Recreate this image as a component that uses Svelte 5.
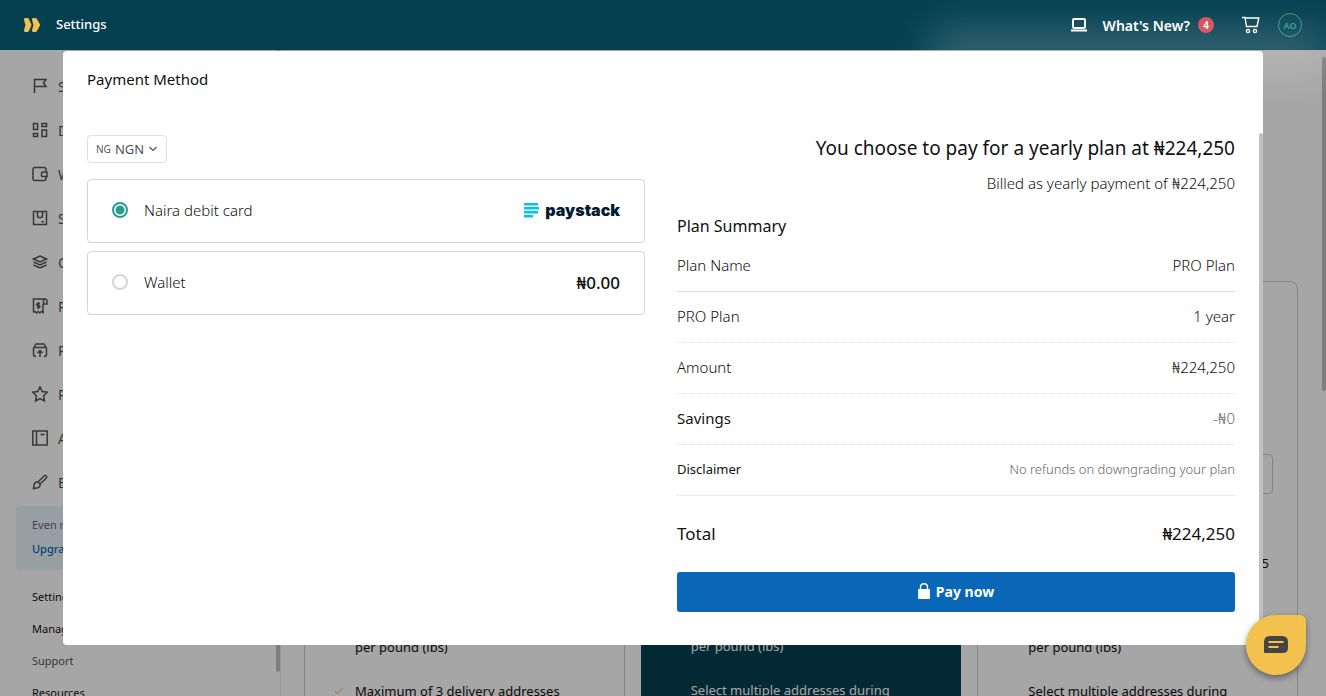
<script>
  const nav = [
    { label: 'Ship', icon: 'flag' },
    { label: 'Dashboard', icon: 'grid' },
    { label: 'Wallet', icon: 'wallet' },
    { label: 'Shipments', icon: 'box' },
    { label: 'Orders', icon: 'layers' },
    { label: 'Payments', icon: 'receipt' },
    { label: 'Pickups', icon: 'pickup' },
    { label: 'Promotions', icon: 'star' },
    { label: 'Address Book', icon: 'book' },
    { label: 'Branding', icon: 'brush' }
  ];

  const icons = {
    flag: 'M2.500 15V1.500h11.500L11.500 5l2.500 3.500H2.500',
    grid: 'M1.500 1.500h4v6h-4zM10 1.500h4.500v3H10zM1.500 11.500h4v3h-4zM10 8h4.500v6.500H10z',
    wallet: 'M14 5V3.500q0-2-2-2H3q-2 0-2 2v9q0 2 2 2h9q2 0 2-2V11M10.500 6H15v4.500h-4.500q-1 0-1-1V7q0-1 1-1z',
    box: 'M1.500 1.500h13v13h-13zM5.500 1.500V6q0 1.500 1.500 1.500h2q1.500 0 1.500-1.500V1.500M9.500 11.800h2.500',
    layers: 'M8 2l6.500 3L8 8 1.500 5zM1.500 8L8 11l6.500-3M1.500 11L8 14l6.500-3',
    receipt: 'M1.500 14.500V3q0-2-1-2h12q2.500 0 2.500 2v3h-4M11.500 6V3q0-2 1.500-2M11 6v8.500l-1.500-1-1.700 1.500-1.600-1.500-1.700 1.500-1.500-1.500-1.500 1M8 5.500H6q-1.300 0-1.300 1t1.300 1h.7q1.300 0 1.300 1t-1.300 1h-2M6.400 4v7',
    pickup: 'M4 14.500q-2.500 0-2.500-2v-6L4 2h8l2.500 4.500v6q0 2-2.500 2M2 5.500h12M8 15V9M5.500 11L8 8.500 10.500 11',
    star: 'M8 .8l2.200 4.700 5.100.7-3.700 3.600.9 5.200L8 12.500 3.500 15l.9-5.200L.7 6.200l5.100-.7z',
    book: 'M.8 1h14.400v14H.8zM4.500 1v14M8.500 4.500h4',
    brush: 'M6 8l6-6q1.200-1 2.200 0t0 2.200L8 10M6 8q-3-.5-3.800 2.200L1.500 14.500l4.300-.8Q8.600 13 8 10zM6 8l2 2'
  };

  const links = ['Settings', 'Manage Users', 'Support', 'Resources'];

  const plans = [
    { dark: false, features: ['Flat shipping discount per\u00a0pound\u00a0(lbs)', 'Maximum of 3 delivery addresses'] },
    { dark: true, features: ['Lower shipping discount per\u00a0pound\u00a0(lbs)', 'Select multiple addresses during shipment'] },
    { dark: false, features: ['Best shipping discount per\u00a0pound\u00a0(lbs)', 'Select multiple addresses during shipment'] }
  ];

  const rows = [
    { label: 'Plan Name', value: 'PRO Plan', kind: 'first' },
    { label: 'PRO Plan', value: '1 year', kind: '' },
    { label: 'Amount', value: '₦224,250', kind: '' },
    { label: 'Savings', value: '-₦0', kind: 'savings' },
    { label: 'Disclaimer', value: 'No refunds on downgrading your plan', kind: 'note' }
  ];

  let method = $state('card');
  let currency = $state('NGN');
</script>

<div class="app">
  <header class="topbar">
    <svg class="logo" viewBox="0 0 16 14" aria-hidden="true">
      <path d="M1.500 1.500h2L6 7l-2.500 5.500h-2L3 7zM9.500 1.500h2L14.500 7l-3 5.500h-2L11 7z" />
    </svg>
    <h1>Settings</h1>
    <nav class="tools">
      <svg class="laptop" viewBox="0 0 16 14" aria-hidden="true">
        <rect x="2" y="1" width="12" height="9" rx="1" />
        <path d="M0 12.500h16" />
      </svg>
      <a href="#news" class="news">What's New? <span class="badge">4</span></a>
      <a href="#cart" class="cart" aria-label="Cart">
        <svg viewBox="0 0 18 18" aria-hidden="true">
          <path d="M0 1.500h3l1.500 9h10.500L16.800 2H3" />
          <circle cx="6" cy="15" r="1.600" />
          <circle cx="13" cy="15" r="1.600" />
        </svg>
      </a>
      <button class="avatar">AO</button>
    </nav>
  </header>

  <div class="page">
    <aside>
      <ul class="menu">
        {#each nav as item}
          <li>
            <a href="#{item.icon}">
              <svg viewBox="0 0 16 16" aria-hidden="true"><path d={icons[item.icon]} /></svg>
              {item.label}
            </a>
          </li>
        {/each}
      </ul>
      <div class="upsell">
        <p>Even more features</p>
        <a href="#upgrade">Upgrade plan</a>
      </div>
      <ul class="links">
        {#each links as link}
          <li><a href="#{link}" class:muted={link === 'Support'}>{link}</a></li>
        {/each}
      </ul>
      <span class="thumb side"></span>
    </aside>

    <main>
      <div class="plans">
        {#each plans as plan}
          <section class="plan" class:dark={plan.dark}>
            <div class="period"></div>
            <p class="rate">5</p>
            <ul>
              {#each plan.features as feature}
                <li>
                  <svg viewBox="0 0 10 8" aria-hidden="true"><path d="M1 4l2.500 2.500L9 1" /></svg>
                  <span>{feature}</span>
                </li>
              {/each}
            </ul>
          </section>
        {/each}
      </div>
    </main>
    <span class="thumb main"></span>
  </div>

  <div class="overlay">
    <div class="modal" role="dialog" aria-labelledby="modal-title">
      <h2 id="modal-title">Payment Method</h2>
      <div class="modal-body">
        <form class="methods">
          <label class="currency">
            <small>NG</small>
            <select bind:value={currency} aria-label="Currency">
              <option>NGN</option>
              <option>USD</option>
            </select>
            <svg viewBox="0 0 8 6" aria-hidden="true"><path d="M.5 1L4 4.500 7.500 1" /></svg>
          </label>
          <label class="method">
            <input type="radio" name="method" value="card" bind:group={method} />
            <span>Naira debit card</span>
            <span class="paystack">
              <svg viewBox="0 0 15 16" aria-hidden="true">
                <path d="M0 1h14v2.500H0zM0 5h15v2.500H0zM0 9h14v2.500H0zM0 13h9v2.500H0z" />
              </svg>
              paystack
            </span>
          </label>
          <label class="method">
            <input type="radio" name="method" value="wallet" bind:group={method} />
            <span>Wallet</span>
            <strong>₦0.00</strong>
          </label>
        </form>

        <section class="summary">
          <h3 class="headline">You choose to pay for a yearly plan at ₦224,250</h3>
          <p class="billed">Billed as yearly payment of ₦224,250</p>
          <h4>Plan Summary</h4>
          <dl>
            {#each rows as row}
              <div class="row {row.kind}">
                <dt>{row.label}</dt>
                <dd>{row.value}</dd>
              </div>
            {/each}
            <div class="total">
              <dt>Total</dt>
              <dd>₦224,250</dd>
            </div>
          </dl>
          <button class="pay">
            <svg viewBox="0 0 12 16" aria-hidden="true">
              <rect y="6" width="12" height="10" rx="1" />
              <path d="M2.500 7V4q0-3.200 3.500-3.200T9.500 4v3" />
            </svg>
            Pay now
          </button>
        </section>
      </div>
      <span class="thumb dialog"></span>
    </div>
  </div>

  <span class="glow"></span>
  <button class="chat" aria-label="Open chat">
    <svg viewBox="0 0 24 18" aria-hidden="true">
      <path class="bubble" d="M6 0h12q6 0 6 6v6q0 5-5 5H1q-1 0-1-1V6q0-6 6-6z" />
      <path class="lines" d="M4.500 6h15M4.500 11h10" />
    </svg>
  </button>
</div>

<style>
  :global(body) {
    font-family: 'Noto Sans', 'Open Sans', sans-serif;
    font-size: 14px;
    color: #111;
  }
  h1, h2, h3, h4, p, ul, dl, dd {
    margin: 0;
    padding: 0;
    font-weight: 400;
  }
  ul {
    list-style: none;
  }
  a {
    color: inherit;
    text-decoration: none;
  }
  button, select {
    font: inherit;
    border: 0;
    padding: 0;
    cursor: pointer;
  }
  svg {
    flex: none;
    fill: none;
    stroke: currentColor;
  }
  .app {
    position: relative;
    display: flex;
    flex-direction: column;
    height: 100vh;
    overflow: hidden;
  }

  .topbar {
    display: flex;
    align-items: center;
    flex: none;
    height: 50px;
    padding: 0 24px;
    background: #044050;
    color: #fff;
  }
  .logo {
    width: 16px;
    height: 14px;
    margin-right: 16px;
    fill: #f2c14e;
    stroke: #f2c14e;
    stroke-width: 3;
    stroke-linejoin: round;
  }
  h1 {
    padding-bottom: 2px;
    font-size: 13px;
    font-weight: 500;
  }
  .tools {
    display: flex;
    align-items: center;
    margin-left: auto;
  }
  .laptop {
    width: 16px;
    height: 14px;
    margin-right: 16px;
    stroke-width: 2;
  }
  .news {
    display: flex;
    align-items: center;
    gap: 8px;
    margin-right: 28px;
    font-weight: 600;
  }
  .badge {
    width: 16px;
    border-radius: 8px;
    background: #cf4858;
    font-size: 10px;
    font-weight: 600;
    line-height: 16px;
    text-align: center;
  }
  .cart svg {
    display: block;
    width: 18px;
    height: 18px;
    margin-right: 18px;
    stroke-width: 1.4;
  }
  .avatar {
    width: 24px;
    height: 24px;
    border: 1px solid #2a9d8f;
    border-radius: 50%;
    background: none;
    color: #2a9d8f;
    font-size: 9px;
    font-weight: 600;
  }

  .page {
    position: relative;
    display: flex;
    flex: 1;
    min-height: 0;
  }
  aside {
    position: relative;
    flex: none;
    box-sizing: border-box;
    width: 281px;
    padding: 14px 16px;
    border-right: 1px solid #e8e8e8;
    overflow: hidden;
  }
  .menu a {
    display: flex;
    align-items: center;
    gap: 10px;
    height: 44px;
    padding-left: 16px;
    color: #555;
  }
  .menu svg {
    width: 16px;
    height: 16px;
    stroke-width: 1.5;
  }
  .upsell {
    height: 50px;
    margin: 2px 0 11px;
    padding: 7px 16px;
    border-radius: 4px;
    background: #e8f5fa;
    font-size: 11px;
    line-height: 24px;
    color: #666;
  }
  .upsell a {
    color: #0a66b7;
    font-weight: 500;
  }
  .links {
    padding-left: 16px;
    font-size: 11px;
    line-height: 32px;
  }
  .links .muted {
    color: #555;
  }

  main {
    flex: 1;
    padding: 231px 28px 0 23px;
  }
  .plans {
    display: grid;
    grid-template-columns: repeat(3, 1fr);
    gap: 16px;
    height: 100%;
  }
  .plan {
    padding: 172px 24px 0;
    border: 1px solid #ccc;
    border-radius: 8px;
    font-size: 13px;
    line-height: 24px;
  }
  .plan.dark {
    padding: 172px 24px 0;
    border: 0;
    background: #044050;
    color: #fff;
  }
  .period {
    height: 38px;
    border: 1px solid #ccc;
    border-radius: 4px;
  }
  .rate {
    padding: 57px 4px 0;
    text-align: right;
  }
  .plan ul {
    display: flex;
    flex-direction: column;
    gap: 20px;
    padding: 36px 20px 0 5px;
  }
  .plan li {
    display: flex;
    align-items: center;
    gap: 11px;
  }
  .plan li svg {
    width: 10px;
    height: 8px;
    stroke: #f2d98a;
    stroke-width: 1.5;
  }

  .thumb {
    position: absolute;
    width: 4px;
    border-radius: 4px;
    background: #c0c0c0;
  }
  .thumb.side {
    top: 0;
    right: 0;
    height: 622px;
  }
  .thumb.main {
    top: 7px;
    right: 0;
    height: 334px;
  }
  .thumb.dialog {
    top: 82px;
    right: 0;
    bottom: 24px;
  }

  .overlay {
    position: absolute;
    inset: 50px 0 0;
    padding: 1px 32px 0;
    background: rgba(0, 0, 0, 0.35);
  }
  .modal {
    position: relative;
    box-sizing: border-box;
    max-width: 1200px;
    margin: 0 auto;
    padding: 16px 28px 33px 24px;
    border-radius: 4px;
    background: #fff;
  }
  h2 {
    margin-bottom: 44px;
    font-size: 15px;
    line-height: 24px;
  }
  .modal-body {
    display: grid;
    grid-template-columns: 1fr 1fr;
    gap: 32px;
  }
  .methods {
    display: flex;
    flex-direction: column;
    align-items: stretch;
    gap: 8px;
  }
  .currency {
    display: flex;
    align-items: center;
    align-self: flex-start;
    gap: 4px;
    box-sizing: border-box;
    height: 28px;
    margin-bottom: 8px;
    padding: 0 9px 0 8px;
    border: 1px solid #e0e0e0;
    border-radius: 4px;
    color: #4a5460;
    font-size: 13px;
  }
  .currency small {
    font-size: 10px;
  }
  .currency select {
    appearance: none;
    background: none;
    color: inherit;
  }
  .currency svg {
    width: 8px;
    height: 6px;
    stroke-width: 1.2;
  }
  .method {
    display: flex;
    align-items: center;
    gap: 16px;
    box-sizing: border-box;
    height: 64px;
    padding: 0 24px 2px;
    border: 1px solid #d5d5d5;
    border-radius: 4px;
    font-size: 15px;
    font-weight: 300;
  }
  .method input {
    appearance: none;
    box-sizing: border-box;
    width: 16px;
    height: 16px;
    margin: 0;
    border: 2px solid #d5d5d5;
    border-radius: 50%;
  }
  .method input:checked {
    border-color: #2a9d8f;
    background: radial-gradient(circle, #2a9d8f 4px, #fff 5px);
  }
  .method strong,
  .paystack {
    margin-left: auto;
  }
  .method strong {
    font-size: 17px;
    font-weight: 500;
  }
  .paystack {
    display: flex;
    align-items: center;
    gap: 6px;
    color: #011b33;
    font-family: Inter, sans-serif;
    font-size: 16px;
    font-weight: 900;
  }
  .paystack svg {
    width: 15px;
    height: 16px;
    fill: #00c3f7;
    stroke: none;
  }

  .headline {
    font-size: 19px;
    line-height: 26px;
    text-align: right;
  }
  .billed {
    margin: 10px 0 19px;
    font-size: 15px;
    font-weight: 300;
    line-height: 24px;
    text-align: right;
  }
  h4 {
    font-size: 16px;
    line-height: 24px;
  }
  .row, .total {
    display: flex;
    align-items: center;
    justify-content: space-between;
  }
  .row {
    height: 48px;
    padding-bottom: 2px;
    border-bottom: 1px dotted #ddd;
    font-size: 15px;
    font-weight: 300;
  }
  .row dd {
    font-weight: 300;
  }
  .row.first {
    margin-top: 3px;
    border-bottom: 1px solid #e0e0e0;
  }
  .savings dt, .note dt {
    font-weight: 400;
  }
  .savings dd, .note dd {
    color: #666;
  }
  .note {
    font-size: 13px;
  }
  .total {
    height: 74px;
    padding-bottom: 2px;
    font-size: 17px;
  }
  .pay {
    display: flex;
    align-items: center;
    justify-content: center;
    gap: 6px;
    width: 100%;
    height: 40px;
    padding-bottom: 2px;
    border-radius: 3px;
    background: #0a66b7;
    color: #fff;
    font-weight: 700;
  }
  .pay svg {
    width: 12px;
    height: 16px;
    stroke-width: 1.4;
  }
  .pay rect {
    fill: #fff;
    stroke: none;
  }

  .glow {
    position: absolute;
    top: 50px;
    right: 16px;
    width: 360px;
    height: 0;
    box-shadow: 0 0 40px 20px rgba(255, 255, 255, 0.22);
    pointer-events: none;
  }
  .chat {
    position: absolute;
    right: 20px;
    bottom: 21px;
    display: flex;
    align-items: center;
    justify-content: center;
    width: 60px;
    height: 60px;
    border-radius: 30px 6px 30px 30px;
    background: #f2c14e;
    box-shadow: 0 3px 6px rgba(0, 0, 0, 0.4);
  }
  .chat svg {
    width: 24px;
    height: 18px;
    stroke-width: 2;
  }
  .bubble {
    fill: #444;
    stroke: none;
  }
  .lines {
    stroke: #f2c14e;
  }
</style>
